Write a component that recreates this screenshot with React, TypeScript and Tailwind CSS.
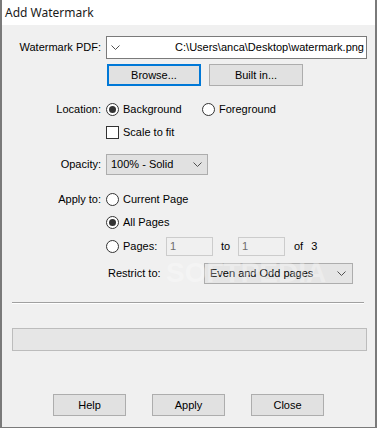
import React from "react";

const font = "font-['Liberation_Sans',Arial,sans-serif]";

const Chevron = ({ className = "" }: { className?: string }) => (
  <svg width="9" height="5" viewBox="0 0 9 5" className={className}>
    <path d="M0.5 0.5 L4.5 4.5 L8.5 0.5" fill="none" stroke="#505050" strokeWidth="1" />
  </svg>
);

const Radio = ({ checked, label }: { checked?: boolean; label: string }) => (
  <div className="flex items-center">
    <span className="w-[13px] h-[13px] rounded-full border border-[#333] bg-white flex items-center justify-center">
      {checked && <span className="w-[7px] h-[7px] rounded-full bg-[#333]" />}
    </span>
    <span className="ml-[4px]">{label}</span>
  </div>
);

const Label = ({ children }: { children: React.ReactNode }) => (
  <div className="w-[100px] text-right pr-[1px]">{children}</div>
);

const Button = ({ children, focused }: { children: React.ReactNode; focused?: boolean }) => (
  <div
    className={
      "h-[22px] flex items-center justify-center bg-[#e1e1e1] " +
      (focused ? "border-2 border-[#0078d7]" : "border border-[#adadad]")
    }
  >
    {children}
  </div>
);

export default function App() {
  return (
    <div className={`w-[377px] h-[428px] bg-[#f0f0f0] border-x-2 border-b border-x-[#7a7a7a] border-b-[#7a7a7a] text-[11px] text-black ${font} relative overflow-hidden`}>
      {/* title bar */}
      <div className="h-[25px] bg-white flex items-center pl-[2px] -mx-[2px] border-x border-[#7a7a7a]">
        <span className="font-['Noto_Sans',sans-serif] text-[12px] text-[#1a1a1a] ml-[2px]">Add Watermark</span>
      </div>

      {/* watermark pdf */}
      <div className="flex items-center mt-[11px]">
        <Label>Watermark PDF:</Label>
        <div className="ml-[4px] w-[261px] h-[23px] bg-white border border-[#7a7a7a] flex items-center pl-[4px] pr-[2px]">
          <Chevron />
          <span className="ml-auto">C:\Users\anca\Desktop\watermark.png</span>
        </div>
      </div>
      <div className="flex mt-[5px] ml-[105px] gap-[8px]">
        <div className="w-[94px]">
          <Button focused>Browse...</Button>
        </div>
        <div className="w-[94px]">
          <Button>Built in...</Button>
        </div>
      </div>

      {/* location */}
      <div className="flex items-center h-[16px] mt-[15px]">
        <Label>Location:</Label>
        <div className="ml-[4px] flex items-center">
          <div className="w-[96px]">
            <Radio checked label="Background" />
          </div>
          <Radio label="Foreground" />
        </div>
      </div>
      <div className="flex items-center h-[16px] mt-[7px] ml-[104px]">
        <span className="w-[13px] h-[13px] border border-[#333] bg-white" />
        <span className="ml-[4px]">Scale to fit</span>
      </div>

      {/* opacity */}
      <div className="flex items-center mt-[14px]">
        <Label>Opacity:</Label>
        <div className="ml-[4px] w-[102px] h-[21px] bg-[#e1e1e1] border border-[#adadad] flex items-center pl-[4px] pr-[5px]">
          <span>100% - Solid</span>
          <Chevron className="ml-auto" />
        </div>
      </div>

      {/* apply to */}
      <div className="flex items-center h-[16px] mt-[16px]">
        <Label>Apply to:</Label>
        <div className="ml-[4px]">
          <Radio label="Current Page" />
        </div>
      </div>
      <div className="flex items-center h-[16px] mt-[7px] ml-[104px]">
        <Radio checked label="All Pages" />
      </div>
      <div className="flex items-center h-[19px] mt-[7px] ml-[104px]">
        <div className="w-[60px]">
          <Radio label="Pages:" />
        </div>
        <div className="w-[47px] h-[19px] border border-[#cccccc] bg-[#f0f0f0] text-[#6d6d6d] flex items-center pl-[3px]">1</div>
        <span className="ml-[8px] w-[17px]">to</span>
        <div className="w-[47px] h-[19px] border border-[#cccccc] bg-[#f0f0f0] text-[#6d6d6d] flex items-center pl-[3px]">1</div>
        <span className="ml-[9px]">of</span>
        <span className="ml-[8px]">3</span>
      </div>
      <div className="flex items-center mt-[7px] ml-[106px]">
        <span className="w-[96px]">Restrict to:</span>
        <div className="w-[149px] h-[21px] bg-[#e5e5e5] border border-[#adadad] flex items-center pl-[5px] pr-[6px]">
          <span>Even and Odd pages</span>
          <Chevron className="ml-auto" />
        </div>
      </div>

      {/* separator */}
      <div className="mt-[18px] mx-[10px] w-[352px] border-t border-[#a0a0a0] border-b border-b-white" />

      {/* progress */}
      <div className="mt-[24px] ml-[10px] w-[355px] h-[23px] bg-[#e6e6e6] border border-[#bcbcbc]" />

      {/* buttons */}
      <div className="flex mt-[43px] ml-[51px] gap-[26px]">
        <div className="w-[73px]">
          <Button>Help</Button>
        </div>
        <div className="w-[73px]">
          <Button>Apply</Button>
        </div>
        <div className="w-[73px]">
          <Button>Close</Button>
        </div>
      </div>

      {/* softpedia watermark overlay */}
      <div className="absolute left-[164px] top-[259px] font-['Liberation_Sans',Arial,sans-serif] font-bold text-[28px] text-white opacity-30 pointer-events-none select-none leading-none">
        SOFTPEDIA
      </div>
    </div>
  );
}
